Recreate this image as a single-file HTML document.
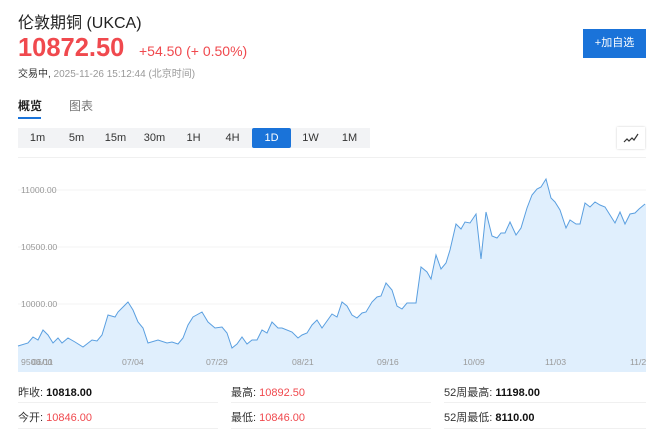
<!DOCTYPE html>
<html><head><meta charset="utf-8"><style>
body{margin:0;width:660px;height:436px;background:#fff;font-family:"Liberation Sans","Noto Sans CJK SC",sans-serif;position:relative;overflow:hidden}
.a{position:absolute;white-space:nowrap}
.tabs{position:absolute;left:18px;top:128px;width:352px;height:20px;background:#f2f3f5;display:flex}
.tabs div{width:39px;text-align:center;font-size:11px;line-height:20px;color:#333}
.tabs .on{background:#1a73d9;color:#fff;border-radius:2px}
.st{font-size:11px;color:#333}
.st b{color:#111}
.st .r{color:#f0494e;font-weight:normal}
.ln{position:absolute;height:1px;background:#f0f0f0}
</style></head><body>
<div class="a" style="left:18px;top:9px;font-size:16px;color:#222">伦敦期铜 (UKCA)</div>
<div class="a" style="left:18px;top:34px;font-size:25.5px;font-weight:bold;color:#f0494e">10872.50</div>
<div class="a" style="left:139px;top:43px;font-size:14px;color:#f0494e">+54.50 (+ 0.50%)</div>
<div class="a" style="left:18px;top:65px;font-size:10px;color:#999"><span style="color:#333">交易中,</span> 2025-11-26 15:12:44 (北京时间)</div>
<div class="a" style="left:583px;top:29px;width:63px;height:29px;background:#1a73d9;color:#fff;font-size:11px;line-height:29px;text-align:center">+加自选</div>
<div class="a" style="left:18px;top:97px;font-size:12px;font-weight:bold;color:#222">概览</div>
<div style="position:absolute;left:18px;top:117px;width:23px;height:2px;background:#1a73d9"></div>
<div class="a" style="left:69px;top:97px;font-size:12px;color:#777">图表</div>
<div class="tabs"><div>1m</div><div>5m</div><div>15m</div><div>30m</div><div>1H</div><div>4H</div><div class="on">1D</div><div>1W</div><div>1M</div></div>
<div class="a" style="left:617px;top:127px;width:28px;height:22px;background:#fff;box-shadow:0 0 2px #ccc"></div>
<svg class="a" style="left:622px;top:132px" width="18" height="12"><path d="M2 10 L5 7 L7 9 L10 6 L12 8 L16 2" fill="none" stroke="#333" stroke-width="1.2"/></svg>
<div class="ln" style="left:18px;top:157px;width:628px"></div>
<svg class="a" style="left:0;top:0" width="660" height="436">
<g stroke="#f3f3f3"><line x1="18" y1="190" x2="646" y2="190"/><line x1="18" y1="247" x2="646" y2="247"/><line x1="18" y1="304" x2="646" y2="304"/></g>
<path d="M18 346 L28 343 L33 337 L38 340 L43 330 L48 335 L53 343 L58 338 L62 343 L68 338 L75 342 L83 347 L92 340 L97 341 L102 335 L108 315 L115 317 L118 312 L128 302 L133 310 L138 322 L143 328 L148 343 L158 340 L167 343 L172 342 L178 344 L183 338 L188 325 L193 317 L202 312 L208 322 L215 328 L222 327 L227 333 L232 348 L237 344 L242 337 L247 344 L252 340 L257 340 L262 330 L267 333 L272 322 L278 328 L282 328 L292 332 L298 338 L302 335 L307 333 L312 325 L317 320 L322 328 L332 314 L337 317 L342 302 L347 306 L352 315 L357 318 L362 313 L366 312 L372 302 L377 297 L381 296 L386 283 L392 290 L397 306 L402 309 L407 303 L416 303 L421 267 L427 272 L431 279 L436 255 L441 269 L446 263 L450 250 L456 224 L461 229 L465 222 L470 223 L476 214 L481 259 L486 212 L492 236 L497 238 L501 233 L505 233 L510 222 L516 235 L521 228 L527 208 L532 195 L537 189 L541 187 L546 179 L551 198 L555 202 L560 210 L566 228 L570 220 L576 224 L580 224 L585 203 L590 207 L595 202 L600 205 L605 207 L615 223 L620 212 L625 224 L630 214 L635 213 L639 209 L645 204 L646 204 L646 372 L18 372 Z" fill="#e0effd"/>
<path d="M18 346 L28 343 L33 337 L38 340 L43 330 L48 335 L53 343 L58 338 L62 343 L68 338 L75 342 L83 347 L92 340 L97 341 L102 335 L108 315 L115 317 L118 312 L128 302 L133 310 L138 322 L143 328 L148 343 L158 340 L167 343 L172 342 L178 344 L183 338 L188 325 L193 317 L202 312 L208 322 L215 328 L222 327 L227 333 L232 348 L237 344 L242 337 L247 344 L252 340 L257 340 L262 330 L267 333 L272 322 L278 328 L282 328 L292 332 L298 338 L302 335 L307 333 L312 325 L317 320 L322 328 L332 314 L337 317 L342 302 L347 306 L352 315 L357 318 L362 313 L366 312 L372 302 L377 297 L381 296 L386 283 L392 290 L397 306 L402 309 L407 303 L416 303 L421 267 L427 272 L431 279 L436 255 L441 269 L446 263 L450 250 L456 224 L461 229 L465 222 L470 223 L476 214 L481 259 L486 212 L492 236 L497 238 L501 233 L505 233 L510 222 L516 235 L521 228 L527 208 L532 195 L537 189 L541 187 L546 179 L551 198 L555 202 L560 210 L566 228 L570 220 L576 224 L580 224 L585 203 L590 207 L595 202 L600 205 L605 207 L615 223 L620 212 L625 224 L630 214 L635 213 L639 209 L645 204" fill="none" stroke="#5a9fe0" stroke-width="1"/>
<g font-family="Liberation Sans" font-size="8.7" fill="#999">
<text x="21" y="193">11000.00</text><text x="21" y="250">10500.00</text><text x="21" y="307">10000.00</text><text x="21" y="365">9500.00</text>
<text x="32" y="365">06/11</text><text x="122" y="365">07/04</text><text x="206" y="365">07/29</text><text x="292" y="365">08/21</text><text x="377" y="365">09/16</text><text x="463" y="365">10/09</text><text x="545" y="365">11/03</text><text x="630" y="365">11/2</text>
</g></svg>
<div class="a st" style="left:18px;top:384px">昨收: <b>10818.00</b></div>
<div class="a st" style="left:231px;top:384px">最高: <span class="r">10892.50</span></div>
<div class="a st" style="left:444px;top:384px">52周最高: <b>11198.00</b></div>
<div class="a st" style="left:18px;top:409px">今开: <span class="r">10846.00</span></div>
<div class="a st" style="left:231px;top:409px">最低: <span class="r">10846.00</span></div>
<div class="a st" style="left:444px;top:409px">52周最低: <b>8110.00</b></div>
<div class="ln" style="left:18px;top:402px;width:200px"></div><div class="ln" style="left:231px;top:402px;width:200px"></div><div class="ln" style="left:444px;top:402px;width:202px"></div>
<div class="ln" style="left:18px;top:428px;width:200px"></div><div class="ln" style="left:231px;top:428px;width:200px"></div><div class="ln" style="left:444px;top:428px;width:202px"></div>
</body></html>
